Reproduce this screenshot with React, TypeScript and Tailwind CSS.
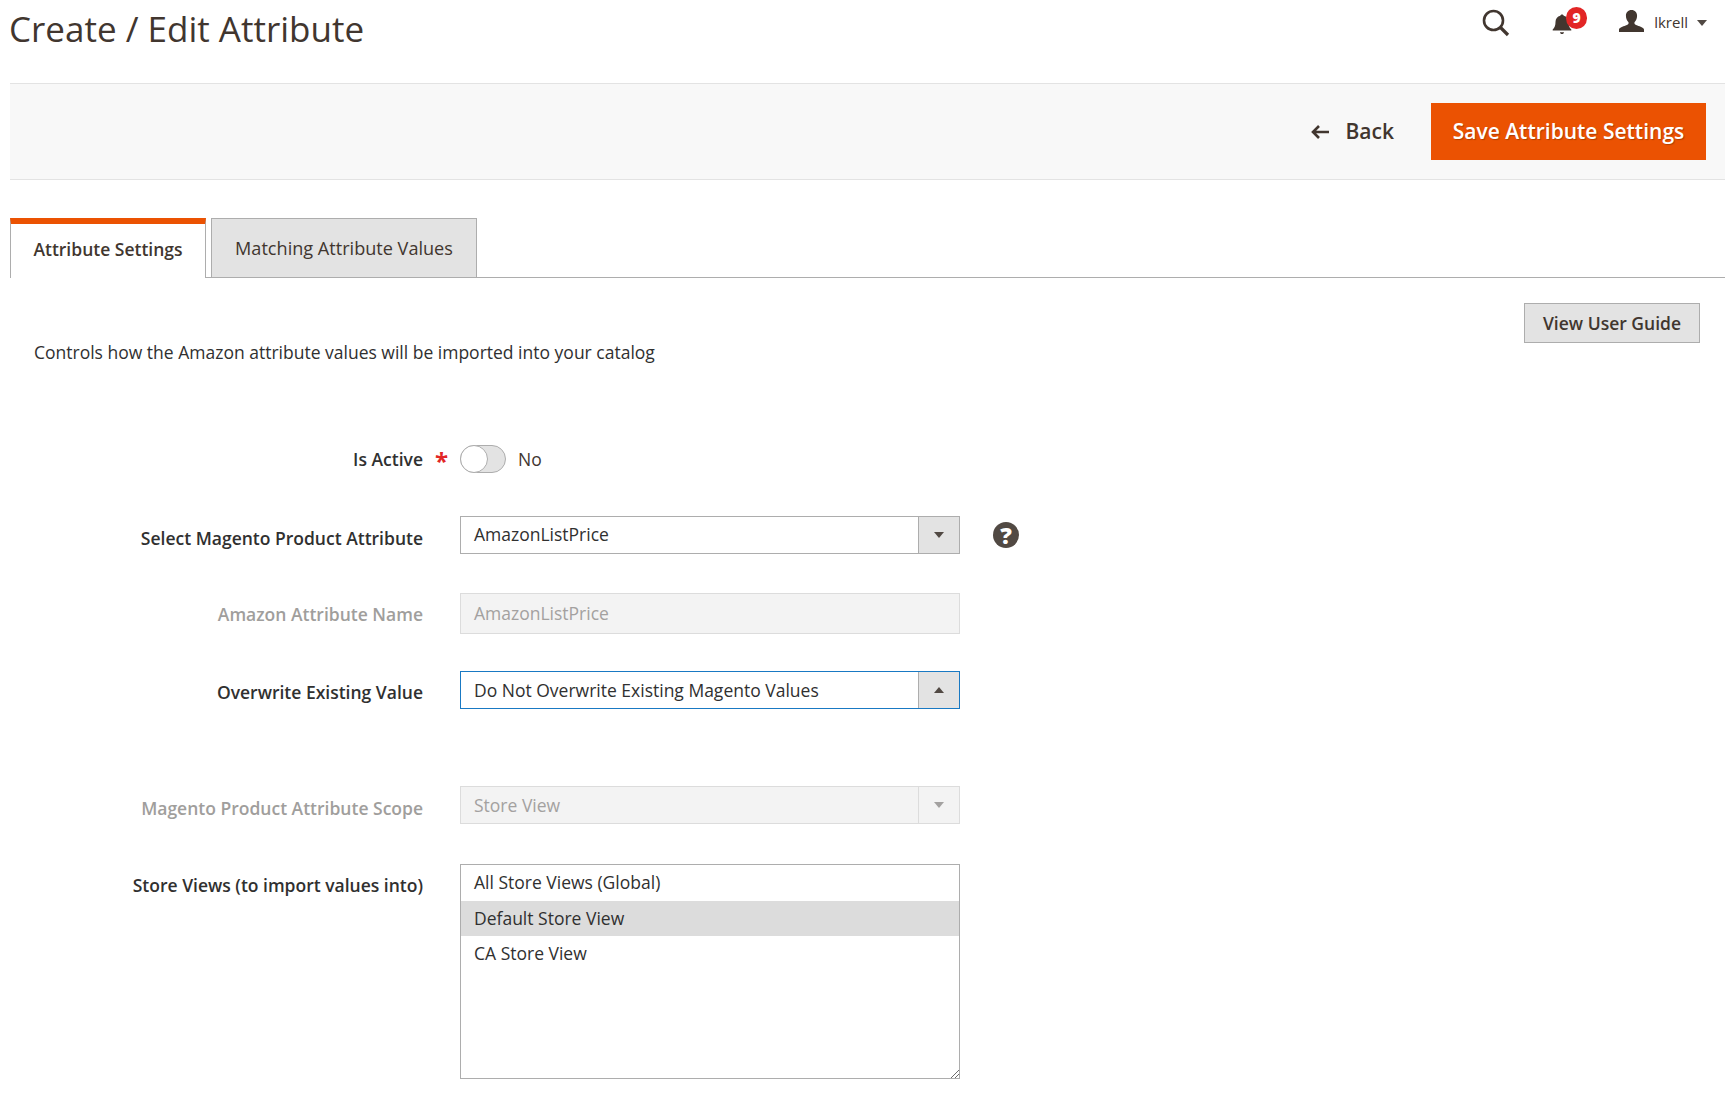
const F = "font-['Open_Sans',sans-serif]";

function Caret({ up, color = "#514943" }: { up?: boolean; color?: string }) {
  return (
    <svg width="10" height="6" viewBox="0 0 10 6" className="block">
      <path d={up ? "M0 6 L5 0 L10 6 Z" : "M0 0 L10 0 L5 6 Z"} fill={color} />
    </svg>
  );
}

function Row({ label, muted, top, children, className }: { label: string; muted?: boolean; top?: string; children: React.ReactNode; className?: string }) {
  return (
    <div className={"flex " + (className ?? "")}>
      <div className={"w-[413px] text-right font-semibold text-[17.5px] leading-[24px] shrink-0 " + (muted ? "text-[#a09e9c] " : "text-[#303030] ") + (top ?? "")}>{label}</div>
      <div className="ml-[37px] flex items-center">{children}</div>
    </div>
  );
}

function SelectBox({ value, up, focus, disabled, lead }: { value: string; up?: boolean; focus?: boolean; disabled?: boolean; lead?: string }) {
  const border = focus ? "border-[#1979c3]" : disabled ? "border-[#dcdcdc]" : "border-[#adadad]";
  return (
    <div className={"w-[500px] h-[38px] border flex " + border + (disabled ? " bg-[#f3f3f3]" : " bg-white")}>
      <div className={"flex-1 pl-[13px] text-[17.5px] " + (lead ?? "leading-[36px] ") + (disabled ? " text-[#a3a1a0]" : " text-[#303030]")}>{value}</div>
      <div className={"w-[41px] flex items-center justify-center border-l " + (disabled ? "bg-[#f3f3f3] border-[#dcdcdc]" : "bg-[#e3e3e3] border-[#adadad]")}>
        <Caret up={up} color={disabled ? "#a3a1a0" : "#514943"} />
      </div>
    </div>
  );
}

export default function App() {
  return (
    <div className={F + " min-h-[1102px] bg-white pl-[10px] pr-[4px] overflow-hidden text-[#303030]"}>
      <header className="h-[83px] flex items-start justify-between">
        <h1 className="text-[35px] leading-[48px] text-[#41362f] -ml-[1px] mt-[5px]">Create / Edit Attribute</h1>
        <div className="flex items-start">
          <svg width="28" height="28" viewBox="0 0 28 28" className="mt-[9px]" fill="none" stroke="#41362f">
            <circle cx="11.5" cy="11.5" r="9.5" strokeWidth="2.6" />
            <path d="M18.5 18.500 L26 26" strokeWidth="3.2" />
          </svg>
          <div className="relative ml-[42px] mt-[13px] w-[24px] h-[22px]">
            <svg width="20" height="22" viewBox="0 0 20 24" fill="#41362f" preserveAspectRatio="none">
              <path d="M10 1.5c1 0 1.6.6 1.7 1.6 3 .8 4.8 3.2 4.8 6.6 0 3.4.7 6 2.8 8.3v1H.7v-1c2.1-2.3 2.8-4.9 2.8-8.3 0-3.4 1.8-5.800 4.800-6.600C8.400 2.100 9 1.500 10 1.500z" />
              <path d="M8 21h4c0 1.300-.9 2-2 2s-2-.7-2-2z" />
            </svg>
            <span className="absolute left-[14px] -top-[6px] w-[21px] h-[22px] rounded-full bg-[#e22626] text-white text-[14px] font-extrabold leading-[22px] text-center">9</span>
          </div>
          <svg width="25" height="22" viewBox="0 0 26 24" className="ml-[43px] mt-[10px]" fill="#41362f" preserveAspectRatio="none">
            <path d="M13 0c3.600 0 5.800 2.600 5.800 6.400 0 2.900-1.100 5.400-2.700 6.900v1.500c0 1 1 1.400 3 2.100 3 1.100 6.600 2.200 6.900 4.400V24H0v-2.700c.3-2.200 3.900-3.300 6.900-4.400 2-.7 3-1.100 3-2.100v-1.500C8.300 11.800 7.200 9.300 7.200 6.400 7.200 2.600 9.400 0 13 0z" />
          </svg>
          <span className="ml-[10px] mt-[10px] text-[15px] leading-[24px] text-[#41362f]">lkrell</span>
          <span className="ml-[9px] mt-[20px] mr-[18px]"><Caret /></span>
        </div>
      </header>

      <div className="h-[97px] bg-[#f8f8f8] border-y border-[#e3e3e3] flex items-center justify-end pr-[19px]">
        <svg width="20" height="16" viewBox="0 0 20 16" fill="none" stroke="#41362f" strokeWidth="2.600" className="-ml-[1px]">
          <path d="M19 8H3M9 2 L3 8 L9 14" />
        </svg>
        <span className="ml-[16px] mb-[2px] text-[21px] font-semibold text-[#41362f] leading-[28px]">Back</span>
        <button className="ml-[37px] w-[275px] h-[57px] pb-[2px] bg-[#eb5202] text-white text-[21px] font-semibold leading-[28px] [text-shadow:1px_1px_1px_rgba(0,0,0,0.25)]">Save Attribute Settings</button>
      </div>

      <div className="mt-[38px] flex items-end h-[60px]">
        <div className="w-[196px] h-[60px] border-x border-[#adadad] bg-white border-t-[6px] border-t-[#eb5202] shrink-0 text-center text-[17.5px] font-semibold leading-[50px] text-[#41362f]">Attribute Settings</div>
        <div className="w-[5px] h-[60px] border-b border-[#adadad] shrink-0" />
        <div className="w-[266px] h-[60px] border border-[#adadad] bg-[#e3e3e3] shrink-0 text-center text-[18.1px] leading-[59px] text-[#41362f]">Matching Attribute Values</div>
        <div className="flex-1 h-[60px] border-b border-[#adadad]" />
      </div>

      <div className="relative">
        <button className="absolute right-[25px] top-[25px] w-[176px] h-[40px] bg-[#e3e3e3] border border-[#adadad] text-[17.5px] font-semibold text-[#41362f]">View User Guide</button>
        <p className="pl-[24px] pt-[62px] text-[17.5px] leading-[24px] text-[#303030]">Controls how the Amazon attribute values will be imported into your catalog</p>

        <Row label="Is Active" className="mt-[81px] h-[28px] items-center relative">
          <div className="relative w-[46px] h-[28px] rounded-full bg-[#e3e3e3] border border-[#adadad]">
            <div className="absolute left-[-1px] top-[-1px] w-[28px] h-[28px] rounded-full bg-white border border-[#adadad]" />
          </div>
          <span className="ml-[12px] text-[17.5px] text-[#41362f]">No</span>
          <span className="absolute left-[425px] top-[4px] text-[#e22626] text-[24px] font-bold leading-[24px]">*</span>
        </Row>

        <Row label="Select Magento Product Attribute" top="mt-[10px]" className="mt-[43px]">
          <SelectBox value="AmazonListPrice" lead="leading-[34px]" />
          <span className="ml-[33px] w-[26px] h-[26px] rounded-full bg-[#514943] text-white text-[23px] font-extrabold text-center leading-[26px]">?</span>
        </Row>

        <Row label="Amazon Attribute Name" muted top="mt-[9px]" className="mt-[39px]">
          <div className="w-[500px] h-[41px] border border-[#dcdcdc] bg-[#f3f3f3] pl-[13px] text-[17.5px] leading-[39px] text-[#a3a1a0]">AmazonListPrice</div>
        </Row>

        <Row label="Overwrite Existing Value" top="mt-[9px]" className="mt-[37px]">
          <SelectBox value="Do Not Overwrite Existing Magento Values" up focus lead="leading-[37px]" />
        </Row>

        <Row label="Magento Product Attribute Scope" muted top="mt-[10px]" className="mt-[77px]">
          <SelectBox value="Store View" disabled />
        </Row>

        <Row label="Store Views (to import values into)" top="mt-[9px]" className="mt-[40px]">
          <div className="relative w-[500px] h-[215px] border border-[#adadad] bg-white pt-[1px] text-[17.5px] text-[#303030]">
            <div className="h-[35px] pl-[13px] leading-[32px]">All Store Views (Global)</div>
            <div className="h-[35px] pl-[13px] leading-[34px] bg-[#dcdcdc]">Default Store View</div>
            <div className="h-[35px] pl-[13px] leading-[34px]">CA Store View</div>
            <svg width="9" height="9" viewBox="0 0 9 9" className="absolute right-0 bottom-0" stroke="#6b6b6b" strokeWidth="1">
              <path d="M1 9 L9 1 M5 9 L9 5" />
            </svg>
          </div>
        </Row>
      </div>
    </div>
  );
}
